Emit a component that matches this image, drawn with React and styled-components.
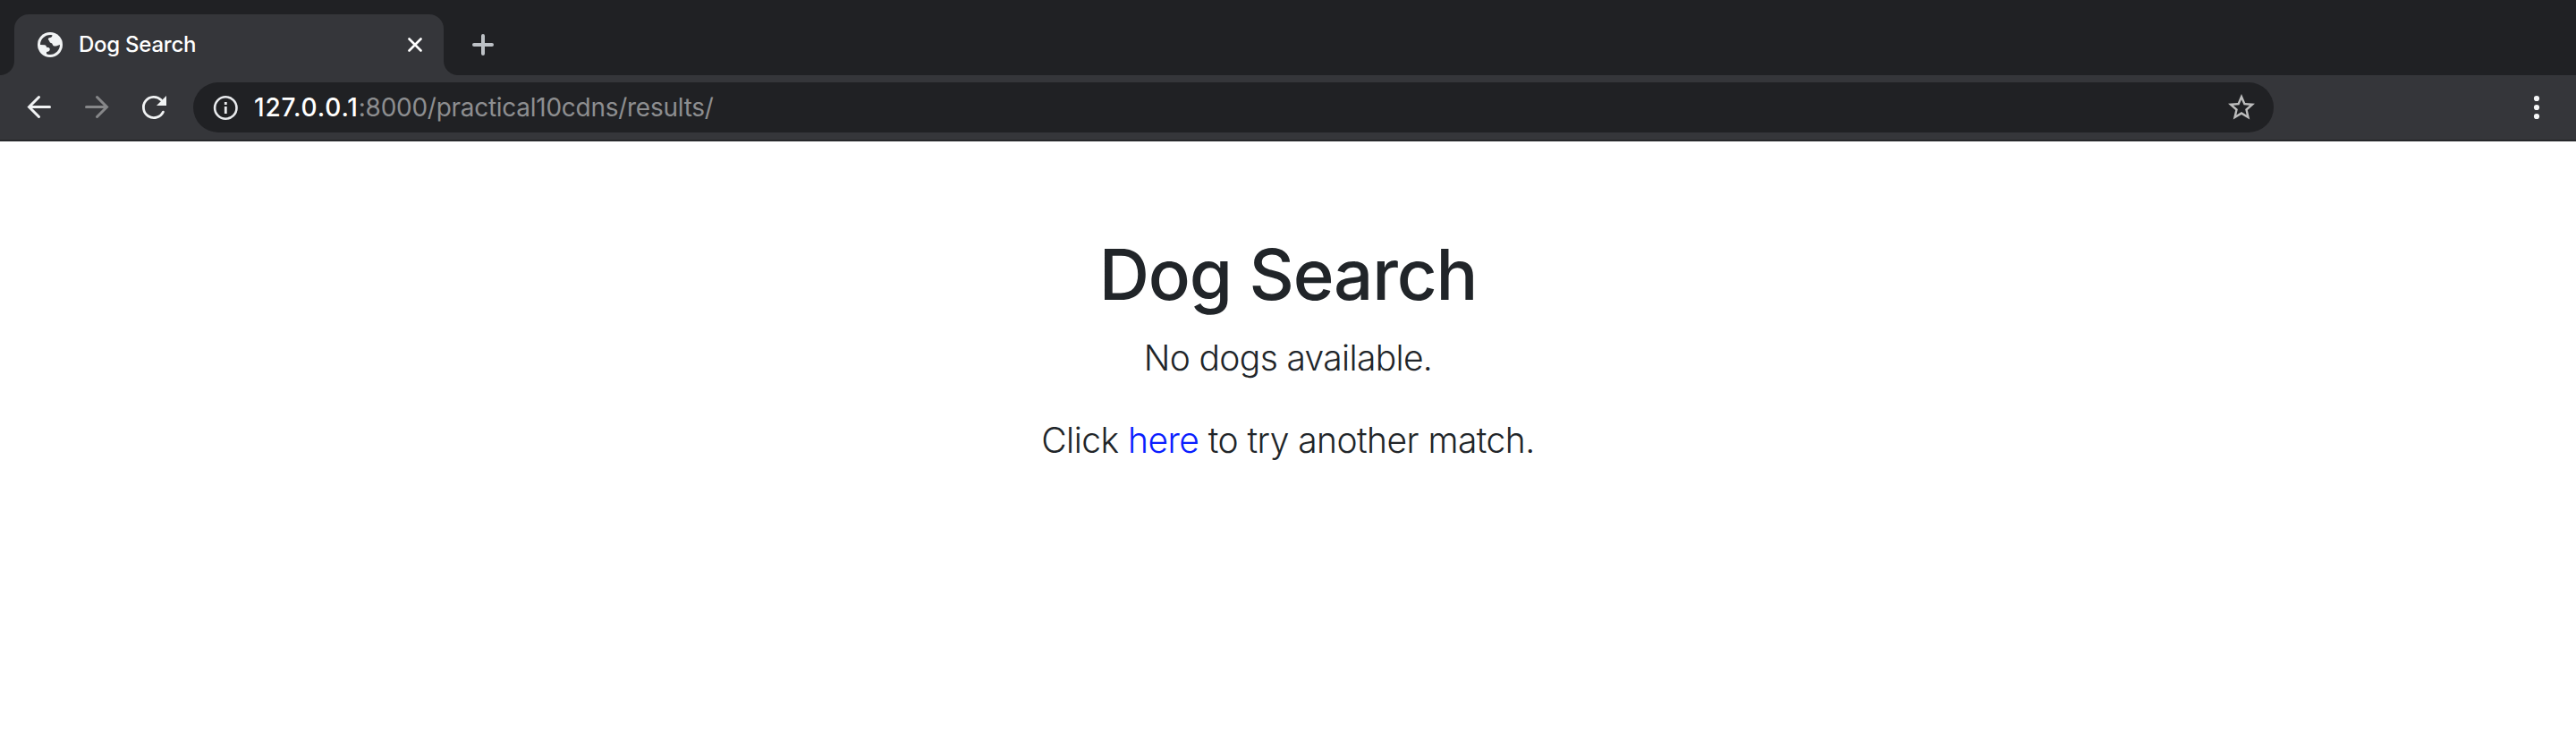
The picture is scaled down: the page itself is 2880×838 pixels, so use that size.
import React from 'react';
import styled, { createGlobalStyle } from 'styled-components';

const GlobalStyle = createGlobalStyle`
  * { box-sizing: border-box; }
  body { margin: 0; background: #fff; font-family: Inter, "Liberation Sans", sans-serif; }
`;

const Window = styled.div`
  display: flex;
  flex-direction: column;
  height: 838px;
  overflow: hidden;
`;

const TabStrip = styled.header`
  display: flex;
  height: 84px;
  padding: 16px 0 0 16px;
  background: #202124;
`;

const Tab = styled.div`
  position: relative;
  display: flex;
  align-items: center;
  width: 480px;
  height: 68px;
  padding: 0 24px 0 26px;
  border-radius: 16px 16px 0 0;
  background: #35363a;
  color: #fff;

  &::before,
  &::after {
    content: '';
    position: absolute;
    bottom: 0;
    width: 16px;
    height: 16px;
  }
  &::before {
    left: -16px;
    background: radial-gradient(circle at 0 0, #202124 15.5px, #35363a 16.5px);
  }
  &::after {
    right: -16px;
    background: radial-gradient(circle at 100% 0, #202124 15.5px, #35363a 16.5px);
  }
`;

const TabTitle = styled.span`
  flex: 1;
  margin: 0 0 1px 18px;
  font-size: 24px;
  font-weight: 500;
  letter-spacing: -0.25px;
  line-height: 30px;
  white-space: nowrap;
`;

const NewTab = styled.div`
  display: flex;
  align-items: center;
  height: 68px;
  margin-left: 32px;
`;

const Toolbar = styled.nav`
  display: flex;
  align-items: center;
  height: 74px;
  padding: 0 36px 0 28px;
  border-bottom: 2px solid #27282b;
  background: #35363a;
`;

const NavButtons = styled.div`
  display: flex;
  align-items: center;
  gap: 32px;
  width: 188px;
`;

const Omnibox = styled.div`
  display: flex;
  align-items: center;
  width: 2326px;
  height: 56px;
  padding: 0 18px 0 20px;
  border-radius: 28px;
  background: #202124;
`;

const Url = styled.span`
  flex: 1;
  margin-left: 16px;
  font-size: 28px;
  line-height: 36px;
  letter-spacing: -0.27px;
  color: #8d8e90;
  white-space: nowrap;
`;

const Host = styled.span`
  font-weight: 500;
  letter-spacing: 0.85px;
  color: #fff;
`;

const MenuSlot = styled.div`
  display: flex;
  margin-left: auto;
`;

const Page = styled.main`
  padding-top: 101px;
  text-align: center;
  color: #212529;
`;

const Title = styled.h1`
  margin: 0 0 15px;
  font-size: 78px;
  font-weight: 500;
  line-height: 96px;
  letter-spacing: -1.2px;
`;

const Lead = styled.p`
  margin: 0 0 32px;
  font-size: 39px;
  font-weight: 300;
  line-height: 60px;
  letter-spacing: ${({ $tracking }) => $tracking};
`;

const Link = styled.a`
  color: #0a1eff;
  text-decoration: none;
`;

const Svg = styled.svg`
  display: block;
  flex: none;
  fill: none;
`;

const GlobeIcon = () => (
  <Svg width="28" height="28" viewBox="0 0 28 28">
    <circle cx="14" cy="14" r="14" fill="#f1f3f4" />
    <path
      d="M3 14C3 8 8 3 14.500 3.100L16.500 3.300C16.300 5.500 15 6.200 13 6.300C11.600 6.600 11.500 8 12.600 9C13.800 10.200 13 11.600 15 12C17 12.300 16.500 15 18.500 15.500C21 16 22.500 14.500 25 14C25 20 20 25 14 25C12 25 10.500 24.600 10 24V22C12 21.800 13.800 21 13.800 19C13.800 17 12 17.300 10.500 17C9.500 16 10 14.500 8 14.200Z"
      fill="#35363a"
    />
  </Svg>
);

const CloseIcon = () => (
  <Svg width="16" height="16" viewBox="0 0 16 16">
    <path d="M1.500 1.500l13 13M14.500 1.500l-13 13" stroke="#fff" strokeWidth="2.600" strokeLinecap="round" />
  </Svg>
);

const PlusIcon = () => (
  <Svg width="24" height="24" viewBox="0 0 24 24">
    <path d="M12 2v20M2 12h20" stroke="#bdc1c6" strokeWidth="4" strokeLinecap="round" />
  </Svg>
);

const ArrowIcon = ({ forward }) => (
  <Svg width="32" height="32" viewBox="0 0 32 32">
    {forward ? (
      <path d="M4.500 15.500h23M16.500 4.500l11 11L16.500 26.500" stroke="#868789" strokeWidth="3" strokeLinecap="round" />
    ) : (
      <path d="M27.500 15.500h-23M15.500 4.500L4.500 15.500l11 11" stroke="#f1f3f4" strokeWidth="3" strokeLinecap="round" />
    )}
  </Svg>
);

const ReloadIcon = () => (
  <Svg width="32" height="32" viewBox="0 0 32 32">
    <path d="M26.400 21.100A11.600 11.600 0 1 1 24.200 7.800" stroke="#f1f3f4" strokeWidth="2.800" strokeLinecap="round" />
    <path d="M30 3v11H19Z" fill="#f1f3f4" />
  </Svg>
);

const InfoIcon = () => (
  <Svg width="32" height="32" viewBox="0 0 32 32">
    <circle cx="16.300" cy="16.500" r="12.200" stroke="#e8eaed" strokeWidth="2.600" />
    <path d="M16.300 10v3M16.300 15v8" stroke="#e8eaed" strokeWidth="2.800" />
  </Svg>
);

const StarIcon = () => (
  <Svg width="36" height="36" viewBox="0 0 24 24">
    <path
      d="M22 9.240l-7.190-.62L12 2 9.190 8.630 2 9.240l5.460 4.730L5.820 21 12 17.270 18.180 21l-1.630-7.030L22 9.240zM12 15.400l-3.760 2.270 1-4.280-3.320-2.880 4.380-.38L12 6.100l1.710 4.040 4.380.38-3.320 2.880 1 4.280L12 15.400z"
      fill="#bdbdbd"
    />
  </Svg>
);

const MenuIcon = () => (
  <Svg width="16" height="32" viewBox="0 0 16 32">
    {[6, 16, 26].map((y) => (
      <circle key={y} cx="8" cy={y} r="3.100" fill="#f5f6f7" />
    ))}
  </Svg>
);

export default function App() {
  return (
    <Window>
      <GlobalStyle />
      <TabStrip>
        <Tab>
          <GlobeIcon />
          <TabTitle>Dog Search</TabTitle>
          <CloseIcon />
        </Tab>
        <NewTab>
          <PlusIcon />
        </NewTab>
      </TabStrip>
      <Toolbar>
        <NavButtons>
          <ArrowIcon />
          <ArrowIcon forward />
          <ReloadIcon />
        </NavButtons>
        <Omnibox>
          <InfoIcon />
          <Url>
            <Host>127.0.0.1</Host>:8000/practical10cdns/results/
          </Url>
          <StarIcon />
        </Omnibox>
        <MenuSlot>
          <MenuIcon />
        </MenuSlot>
      </Toolbar>
      <Page>
        <Title>Dog Search</Title>
        <Lead $tracking="-0.66px">No dogs available.</Lead>
        <Lead $tracking="-0.55px">
          Click <Link>here</Link> to try another match.
        </Lead>
      </Page>
    </Window>
  );
}
